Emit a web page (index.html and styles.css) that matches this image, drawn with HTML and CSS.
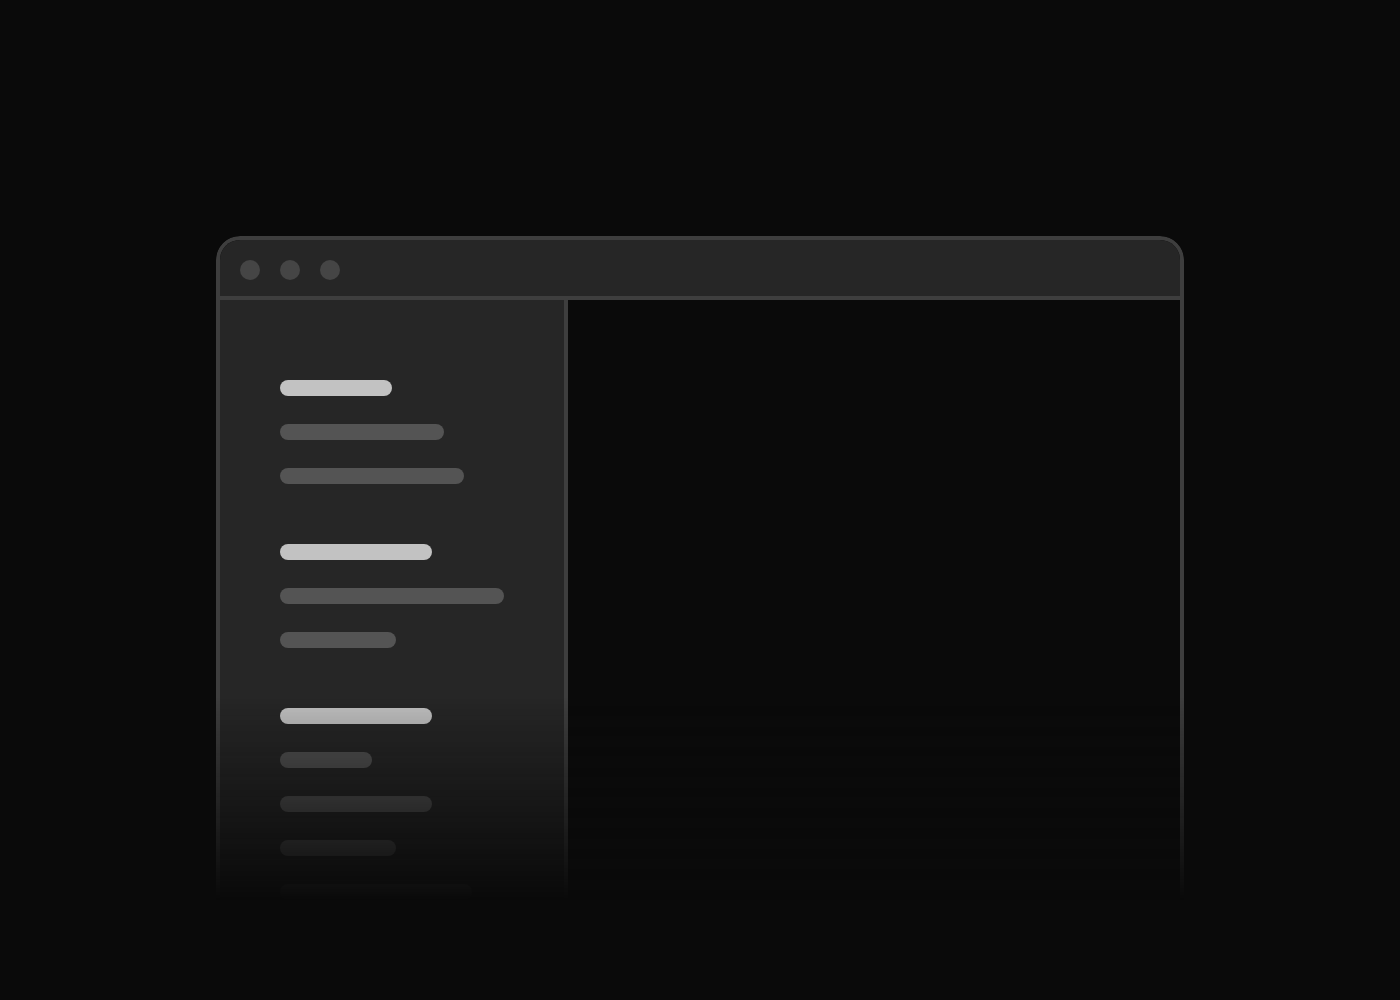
FILE: index.html
```html
<!DOCTYPE html>
<html>
<head>
<meta charset="utf-8">
<link rel="stylesheet" href="styles.css">
</head>
<body>
<div class="stage">
  <div class="window">
    <div class="titlebar">
      <span class="dot"></span><span class="dot"></span><span class="dot"></span>
    </div>
    <div class="body">
      <div class="sidebar">
        <div class="group">
          <div class="bar head" style="width:112px"></div>
          <div class="bar" style="width:164px"></div>
          <div class="bar" style="width:184px"></div>
        </div>
        <div class="group">
          <div class="bar head" style="width:152px"></div>
          <div class="bar" style="width:224px"></div>
          <div class="bar" style="width:116px"></div>
        </div>
        <div class="group">
          <div class="bar head" style="width:152px"></div>
          <div class="bar" style="width:92px"></div>
          <div class="bar" style="width:152px"></div>
          <div class="bar" style="width:116px"></div>
          <div class="bar" style="width:192px"></div>
          <div class="bar" style="width:140px"></div>
        </div>
      </div>
      <div class="main"></div>
    </div>
  </div>
</div>
</body>
</html>
```
FILE: styles.css
```css
html, body {
  margin: 0;
  padding: 0;
  background: #0a0a0a;
  height: 1000px;
  overflow: hidden;
}
.stage {
  padding-top: 236px;
  display: flex;
  justify-content: center;
}
.window {
  width: 960px;
  height: 800px;
  border: 4px solid #3e3e3e;
  border-bottom: none;
  border-radius: 24px 24px 0 0;
  display: flex;
  flex-direction: column;
  overflow: hidden;
  -webkit-mask-image: linear-gradient(to bottom, #000 0, #000 460px, transparent 664px);
  mask-image: linear-gradient(to bottom, #000 0, #000 460px, transparent 664px);
}
.titlebar {
  box-sizing: border-box;
  height: 60px;
  background: #262626;
  border-bottom: 4px solid #3e3e3e;
  display: flex;
  align-items: center;
  padding: 4px 0 0 20px;
  gap: 20px;
  flex-shrink: 0;
}
.dot {
  width: 20px;
  height: 20px;
  border-radius: 50%;
  background: #454545;
}
.body {
  flex: 1;
  display: flex;
}
.sidebar {
  width: 284px;
  background: #262626;
  border-right: 4px solid #3e3e3e;
  padding: 80px 0 0 60px;
  display: flex;
  flex-direction: column;
  gap: 60px;
}
.group {
  display: flex;
  flex-direction: column;
  gap: 28px;
}
.bar {
  height: 16px;
  border-radius: 8px;
  background: #545454;
}
.bar.head {
  background: #c2c2c2;
}
.main {
  flex: 1;
  background: #0a0a0a;
}
```
